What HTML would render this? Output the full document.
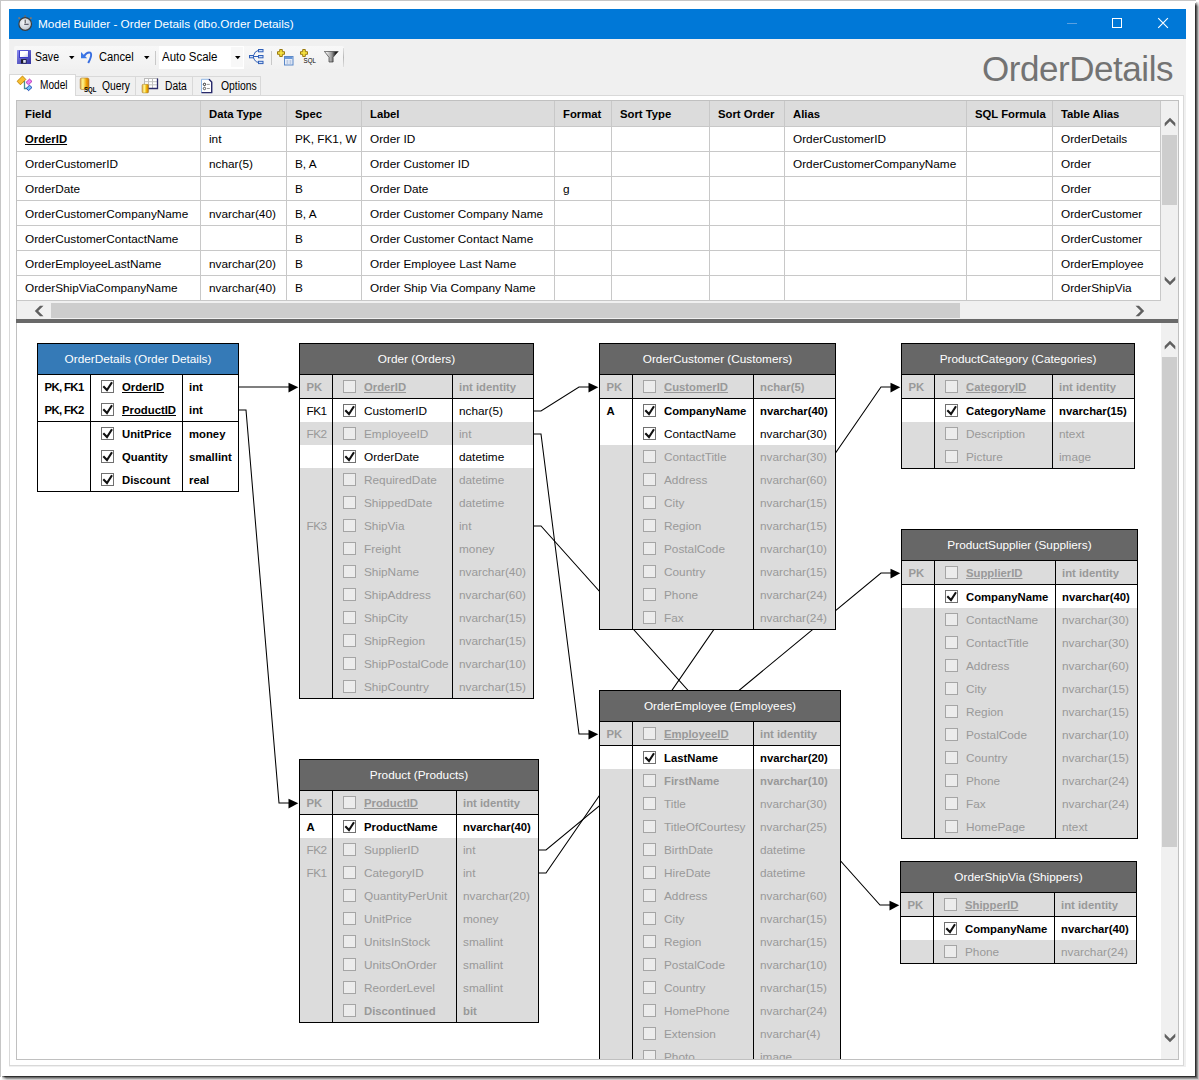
<!DOCTYPE html><html><head><meta charset="utf-8"><style>
*{box-sizing:border-box;margin:0;padding:0}
html,body{width:1199px;height:1080px;overflow:hidden;background:#fff;font-family:"Liberation Sans",sans-serif;}
.a{position:absolute}
.t{position:absolute;white-space:pre;}
.g{font-size:11.8px;color:#000;line-height:24px;height:24px}
.gh{font-size:11.3px;font-weight:bold;color:#000;line-height:25px;height:25px}
.tb{position:absolute;border:1px solid #000;background:#fff;overflow:hidden}
.th{position:absolute;left:0;right:0;top:0;height:30px;color:#fff;font-size:11.8px;line-height:30px;text-align:center;white-space:pre}
.r{position:absolute;height:23px;line-height:23px;font-size:11.8px;white-space:pre;margin-top:1px}
.b{font-weight:bold;font-size:11.3px;margin-top:1px}
.u{text-decoration:underline}
.gr{color:#999}
.cb{position:absolute;width:13px;height:13px;border:1px solid #a5a5a5;background:#ececec}
.cbc{border-color:#707070;background:#fff}
.cbc svg{position:absolute;left:-1px;top:-1px}
</style></head><body><div class="a" style="left:0;top:0;width:1196px;height:1px;background:#c6c6c6"></div><div class="a" style="left:0;top:0;width:1px;height:1077px;background:#c6c6c6"></div><div class="a" style="left:1195px;top:3px;width:1px;height:1074px;background:linear-gradient(to bottom,#aaa,#2e2e2e 3px)"></div><div class="a" style="left:1196px;top:2px;width:1px;height:1076px;background:linear-gradient(to bottom,#ddd,#5c5c5c 4px)"></div><div class="a" style="left:1197px;top:2px;width:1px;height:1077px;background:linear-gradient(to bottom,#eee,#8e8e8e 5px)"></div><div class="a" style="left:1198px;top:1px;width:1px;height:1079px;background:linear-gradient(to bottom,#fff,#c4c4c4 6px)"></div><div class="a" style="left:2px;top:1076px;width:1194px;height:1px;background:linear-gradient(to right,#aaa,#2e2e2e 3px)"></div><div class="a" style="left:2px;top:1077px;width:1195px;height:1px;background:linear-gradient(to right,#ddd,#6e6e6e 4px)"></div><div class="a" style="left:2px;top:1078px;width:1196px;height:1px;background:linear-gradient(to right,#eee,#9a9a9a 5px)"></div><div class="a" style="left:1px;top:1079px;width:1198px;height:1px;background:linear-gradient(to right,#fff,#cccccc 6px)"></div><div class="a" style="left:9px;top:39px;width:1177px;height:1028px;background:#f0f0f0"></div><div class="a" style="left:9px;top:9px;width:1177px;height:30px;background:#0078d7"></div><div class="t" style="left:38px;top:9px;line-height:30px;font-size:11.8px;color:#fff">Model Builder - Order Details (dbo.Order Details)</div><svg class="a" style="left:17px;top:14px" width="17" height="18" viewBox="0 0 17 18">
<defs><radialGradient id="sw" cx="0.4" cy="0.4" r="0.7"><stop offset="0" stop-color="#f4f6f8"/><stop offset="1" stop-color="#b8c0c8"/></radialGradient></defs>
<rect x="7.3" y="1.3" width="1.6" height="2.5" fill="#666"/><circle cx="2.2" cy="4.2" r="1.1" fill="#777"/><circle cx="13.8" cy="4.2" r="1.1" fill="#777"/>
<circle cx="8.2" cy="10" r="6.3" fill="url(#sw)" stroke="#3c3c3c" stroke-width="1.2"/>
<line x1="8.2" y1="5.6" x2="8.2" y2="9.3" stroke="#444" stroke-width="1"/><line x1="7.2" y1="10.3" x2="11.6" y2="10.3" stroke="#445" stroke-width="1.1"/></svg><div class="a" style="left:1067px;top:23px;width:10px;height:1px;background:#5aa0e0"></div><div class="a" style="left:1112px;top:18px;width:10px;height:10px;border:1px solid #fff"></div><svg class="a" style="left:1157px;top:17px" width="12" height="12" viewBox="0 0 12 12"><path d="M1.2 1.2L10.9 10.9M10.9 1.2L1.2 10.9" stroke="#fff" stroke-width="1.15"/></svg><div class="a" style="left:14px;top:46px;width:330px;height:23px;background:linear-gradient(#f8f8f8,#f1f1f1);border-radius:2px"></div><svg class="a" style="left:17px;top:50px" width="14" height="14" viewBox="0 0 14 14">
<defs><linearGradient id="sg" x1="0" y1="0" x2="1" y2="1"><stop offset="0" stop-color="#8a8af0"/><stop offset="1" stop-color="#3232a0"/></linearGradient>
<linearGradient id="sl" x1="0" y1="0" x2="1" y2="1"><stop offset="0.5" stop-color="#fff"/><stop offset="1" stop-color="#c8cce8"/></linearGradient></defs>
<rect x="0" y="0" width="14" height="14" rx="0.5" fill="url(#sg)"/><rect x="2" y="0.5" width="9.5" height="7.5" fill="#3a3ac8"/><rect x="3" y="1" width="8" height="6" fill="url(#sl)"/>
<rect x="4" y="9.2" width="5.5" height="4.3" fill="#1a1a2a"/><rect x="6.2" y="10" width="2.6" height="2.8" fill="#dfe4f4"/></svg><div class="t" style="left:35px;top:45.5px;line-height:23px;font-size:12px;color:#000;transform:scaleX(0.877);transform-origin:0 50%">Save</div><svg class="a" style="left:68.8px;top:56px" width="6" height="4"><path d="M0 0H5.5L2.75 3.3Z" fill="#000"/></svg><svg class="a" style="left:80px;top:49px" width="14" height="16" viewBox="0 0 14 16">
<path d="M1 3L1 9.2L7.2 9.2Z" fill="#3a78e8"/><path d="M4.2 7 Q7 2.6 10.2 3.6 Q12.8 5.5 8.2 14" fill="none" stroke="#3a6fe0" stroke-width="2"/></svg><div class="t" style="left:98.5px;top:45.5px;line-height:23px;font-size:12px;color:#000;transform:scaleX(0.93);transform-origin:0 50%">Cancel</div><svg class="a" style="left:143.5px;top:56px" width="6" height="4"><path d="M0 0H5.5L2.75 3.3Z" fill="#000"/></svg><div class="a" style="left:155px;top:51px;width:1px;height:14px;background:#c8c8c8"></div><div class="a" style="left:159px;top:46px;width:85px;height:23px;background:#fff"></div><div class="a" style="left:231px;top:47px;width:12px;height:20px;background:#f8f8f8"></div><div class="t" style="left:162px;top:45.5px;line-height:23px;font-size:12px;color:#000;transform:scaleX(0.956);transform-origin:0 50%">Auto Scale</div><svg class="a" style="left:235px;top:56px" width="6" height="4"><path d="M0 0H5.5L2.75 3.3Z" fill="#000"/></svg><svg class="a" style="left:249px;top:49px" width="15" height="16" viewBox="0 0 15 16">
<path d="M4 7.5H9.5M4 7.5Q6 1.5 9.5 1.3M4 7.5Q6 13.5 9.5 13.3" stroke="#2f5fb8" stroke-width="1" fill="none"/>
<rect x="0.5" y="6.5" width="4" height="2.3" fill="#cfe0f8" stroke="#2f5fb8"/><rect x="9.5" y="0.5" width="4.5" height="2.3" fill="#cfe0f8" stroke="#2f5fb8"/><rect x="9.5" y="6.5" width="4.5" height="2.3" fill="#cfe0f8" stroke="#2f5fb8"/><rect x="9.5" y="12.3" width="4.5" height="2.3" fill="#cfe0f8" stroke="#2f5fb8"/></svg><div class="a" style="left:271px;top:51px;width:1px;height:14px;background:#c8c8c8"></div><svg class="a" style="left:277px;top:49px" width="17" height="17" viewBox="0 0 17 17">
<path d="M2.7 0.5H5.3V2.7H7.5V5.3H5.3V7.5H2.7V5.3H0.5V2.7H2.7Z" fill="#f4e040" stroke="#9a7a10" stroke-width="1"/>
<rect x="7.5" y="7.5" width="8.5" height="8.5" fill="#e8eef8" stroke="#5a88c8"/><rect x="8" y="8" width="7.5" height="2" fill="#6a98d8"/><path d="M9.5 12H11.3M12.5 12H14.3M9.5 14H11.3M12.5 14H14.3" stroke="#90a8d0" stroke-width="1"/></svg><svg class="a" style="left:300px;top:49px" width="18" height="17" viewBox="0 0 18 17">
<path d="M2.7 0.5H5.3V2.7H7.5V5.3H5.3V7.5H2.7V5.3H0.5V2.7H2.7Z" fill="#f4e040" stroke="#9a7a10" stroke-width="1"/>
<text x="3.6" y="14.3" font-family="Liberation Sans" font-size="7.6" fill="#000" textLength="12.4" lengthAdjust="spacingAndGlyphs">SQL</text></svg><svg class="a" style="left:324px;top:51px" width="15" height="12" viewBox="0 0 15 12">
<defs><linearGradient id="fg" x1="0" y1="0" x2="1" y2="0"><stop offset="0.1" stop-color="#fafafa"/><stop offset="0.55" stop-color="#909090"/><stop offset="0.85" stop-color="#101010"/></linearGradient></defs>
<path d="M0.4 0.4H14.2L9.1 6.3V11H5V6.3Z" fill="url(#fg)" stroke="#3a3a3a" stroke-width="0.7"/></svg><div class="a" style="left:343px;top:48px;width:1px;height:19px;background:linear-gradient(#e0e0e0,#b8b8b8 50%,#e0e0e0)"></div><div class="t" style="left:982px;top:47px;font-size:35px;letter-spacing:-0.45px;line-height:44px;color:#737373">OrderDetails</div><div class="a" style="left:9px;top:95px;width:1175px;height:971px;background:#fff;border:1px solid #d9d9d9;border-top-color:#d9d9d9"></div><div class="a" style="left:75px;top:76px;width:61px;height:19px;background:#f0f0f0;border:1px solid #d9d9d9;border-bottom:none"></div><div class="t" style="left:102px;top:78px;line-height:17px;font-size:12px;color:#000;transform:scaleX(0.857);transform-origin:0 50%">Query</div><div class="a" style="left:135px;top:76px;width:58px;height:19px;background:#f0f0f0;border:1px solid #d9d9d9;border-bottom:none"></div><div class="t" style="left:164.5px;top:78px;line-height:17px;font-size:12px;color:#000;transform:scaleX(0.856);transform-origin:0 50%">Data</div><div class="a" style="left:192px;top:76px;width:69px;height:19px;background:#f0f0f0;border:1px solid #d9d9d9;border-bottom:none"></div><div class="t" style="left:220.5px;top:78px;line-height:17px;font-size:12px;color:#000;transform:scaleX(0.863);transform-origin:0 50%">Options</div><div class="a" style="left:9px;top:74px;width:67px;height:22px;background:#fff;border:1px solid #d9d9d9;border-bottom:none"></div><div class="t" style="left:39.5px;top:77px;line-height:17px;font-size:12px;color:#000;transform:scaleX(0.841);transform-origin:0 50%">Model</div><svg class="a" style="left:14px;top:74px" width="22" height="22" viewBox="0 0 22 22">
<path d="M9 7.5H10.5V14.5H13" stroke="#4a9090" stroke-width="1.3" fill="none"/>
<path d="M3.1 7.3L8.5 2L11.8 5.4L6.4 10.8Z" fill="#f8c030" stroke="#c08000" stroke-width="0.9"/>
<path d="M12 8.4L15.5 5.1L18 7.4L14.5 10.8Z" fill="#f080f0" stroke="#b030b0" stroke-width="0.9"/>
<path d="M12.4 14.3L15.5 11.2L18 13.5L14.5 16.7Z" fill="#70c0f8" stroke="#1840b0" stroke-width="0.9"/></svg><svg class="a" style="left:78px;top:74px" width="22" height="22" viewBox="0 0 22 22">
<defs><linearGradient id="cy" x1="0" y1="0" x2="1" y2="0"><stop offset="0" stop-color="#e0a040"/><stop offset="0.3" stop-color="#fff890"/><stop offset="0.7" stop-color="#f0a000"/><stop offset="1" stop-color="#c07010"/></linearGradient></defs>
<rect x="2.2" y="4" width="8.8" height="11.5" rx="1.5" fill="url(#cy)" stroke="#b08030" stroke-width="0.6"/>
<text x="6" y="18" font-family="Liberation Sans" font-weight="bold" font-size="6.8" fill="#000" textLength="12.3" lengthAdjust="spacingAndGlyphs">SQL</text></svg><svg class="a" style="left:138px;top:74px" width="22" height="22" viewBox="0 0 22 22">
<defs><linearGradient id="cy2" x1="0" y1="0" x2="1" y2="0"><stop offset="0" stop-color="#e0a040"/><stop offset="0.35" stop-color="#fff890"/><stop offset="0.7" stop-color="#f0b000"/><stop offset="1" stop-color="#c07010"/></linearGradient></defs>
<rect x="6.5" y="4.5" width="13" height="10" fill="#fff" stroke="#bbb" stroke-width="1"/><path d="M6.5 7.7H19.5M6.5 10.8H19.5M10.5 4.5V14.5M14.5 4.5V14.5" stroke="#c0c0c0" stroke-width="1"/>
<path d="M19.5 4.5V14.5H10" stroke="#2a2a6a" stroke-width="1.3" fill="none"/>
<rect x="4" y="10.3" width="6.6" height="8.6" rx="1.2" fill="url(#cy2)" stroke="#a08030" stroke-width="0.5"/></svg><svg class="a" style="left:196px;top:74px" width="22" height="22" viewBox="0 0 22 22">
<path d="M5.5 5.3H13L15.7 8V18.6H5.5Z" fill="#fff" stroke="#90b8e8" stroke-width="1"/>
<path d="M13 5.3L15.7 8V18.6H5.5" stroke="#2a2a6a" stroke-width="1.4" fill="none"/>
<circle cx="8.5" cy="10.4" r="1.2" fill="none" stroke="#111" stroke-width="0.9"/><circle cx="8.5" cy="14.5" r="1.2" fill="none" stroke="#444" stroke-width="0.9"/>
<path d="M11 10.4H13.8M11 14.5H13.8" stroke="#999" stroke-width="1"/></svg><div class="a" style="left:16px;top:100px;width:1163px;height:219px;background:#fff;border:1px solid #c0c0c0;border-bottom:none"></div><div class="a" style="left:17px;top:101px;width:1144px;height:25px;background:#dcdcdc"></div><div class="a" style="left:200px;top:101px;width:1px;height:200px;background:#c8c8c8"></div><div class="a" style="left:286px;top:101px;width:1px;height:200px;background:#c8c8c8"></div><div class="a" style="left:361px;top:101px;width:1px;height:200px;background:#c8c8c8"></div><div class="a" style="left:554px;top:101px;width:1px;height:200px;background:#c8c8c8"></div><div class="a" style="left:611px;top:101px;width:1px;height:200px;background:#c8c8c8"></div><div class="a" style="left:709px;top:101px;width:1px;height:200px;background:#c8c8c8"></div><div class="a" style="left:784px;top:101px;width:1px;height:200px;background:#c8c8c8"></div><div class="a" style="left:966px;top:101px;width:1px;height:200px;background:#c8c8c8"></div><div class="a" style="left:1052px;top:101px;width:1px;height:200px;background:#c8c8c8"></div><div class="a" style="left:1160px;top:101px;width:1px;height:200px;background:#c8c8c8"></div><div class="a" style="left:17px;top:126px;width:1144px;height:1px;background:#c8c8c8"></div><div class="a" style="left:17px;top:151px;width:1144px;height:1px;background:#c8c8c8"></div><div class="a" style="left:17px;top:176px;width:1144px;height:1px;background:#c8c8c8"></div><div class="a" style="left:17px;top:200px;width:1144px;height:1px;background:#c8c8c8"></div><div class="a" style="left:17px;top:225px;width:1144px;height:1px;background:#c8c8c8"></div><div class="a" style="left:17px;top:250px;width:1144px;height:1px;background:#c8c8c8"></div><div class="a" style="left:17px;top:275px;width:1144px;height:1px;background:#c8c8c8"></div><div class="a" style="left:17px;top:300px;width:1144px;height:1px;background:#c8c8c8"></div><div class="t gh" style="left:25px;top:102px">Field</div><div class="t gh" style="left:209px;top:102px">Data Type</div><div class="t gh" style="left:295px;top:102px">Spec</div><div class="t gh" style="left:370px;top:102px">Label</div><div class="t gh" style="left:563px;top:102px">Format</div><div class="t gh" style="left:620px;top:102px">Sort Type</div><div class="t gh" style="left:718px;top:102px">Sort Order</div><div class="t gh" style="left:793px;top:102px">Alias</div><div class="t gh" style="left:975px;top:102px">SQL Formula</div><div class="t gh" style="left:1061px;top:102px">Table Alias</div><div class="t gh u" style="left:25px;top:127px;line-height:24px;height:24px;font-size:11.3px">OrderID</div><div class="t g" style="left:209px;top:127px;line-height:24px;height:24px">int</div><div class="t g" style="left:295px;top:127px;line-height:24px;height:24px">PK, FK1, W</div><div class="t g" style="left:370px;top:127px;line-height:24px;height:24px">Order ID</div><div class="t g" style="left:793px;top:127px;line-height:24px;height:24px">OrderCustomerID</div><div class="t g" style="left:1061px;top:127px;line-height:24px;height:24px">OrderDetails</div><div class="t g" style="left:25px;top:152px;line-height:24px;height:24px">OrderCustomerID</div><div class="t g" style="left:209px;top:152px;line-height:24px;height:24px">nchar(5)</div><div class="t g" style="left:295px;top:152px;line-height:24px;height:24px">B, A</div><div class="t g" style="left:370px;top:152px;line-height:24px;height:24px">Order Customer ID</div><div class="t g" style="left:793px;top:152px;line-height:24px;height:24px">OrderCustomerCompanyName</div><div class="t g" style="left:1061px;top:152px;line-height:24px;height:24px">Order</div><div class="t g" style="left:25px;top:177px;line-height:24px;height:24px">OrderDate</div><div class="t g" style="left:295px;top:177px;line-height:24px;height:24px">B</div><div class="t g" style="left:370px;top:177px;line-height:24px;height:24px">Order Date</div><div class="t g" style="left:563px;top:177px;line-height:24px;height:24px">g</div><div class="t g" style="left:1061px;top:177px;line-height:24px;height:24px">Order</div><div class="t g" style="left:25px;top:202px;line-height:24px;height:24px">OrderCustomerCompanyName</div><div class="t g" style="left:209px;top:202px;line-height:24px;height:24px">nvarchar(40)</div><div class="t g" style="left:295px;top:202px;line-height:24px;height:24px">B, A</div><div class="t g" style="left:370px;top:202px;line-height:24px;height:24px">Order Customer Company Name</div><div class="t g" style="left:1061px;top:202px;line-height:24px;height:24px">OrderCustomer</div><div class="t g" style="left:25px;top:227px;line-height:24px;height:24px">OrderCustomerContactName</div><div class="t g" style="left:295px;top:227px;line-height:24px;height:24px">B</div><div class="t g" style="left:370px;top:227px;line-height:24px;height:24px">Order Customer Contact Name</div><div class="t g" style="left:1061px;top:227px;line-height:24px;height:24px">OrderCustomer</div><div class="t g" style="left:25px;top:252px;line-height:24px;height:24px">OrderEmployeeLastName</div><div class="t g" style="left:209px;top:252px;line-height:24px;height:24px">nvarchar(20)</div><div class="t g" style="left:295px;top:252px;line-height:24px;height:24px">B</div><div class="t g" style="left:370px;top:252px;line-height:24px;height:24px">Order Employee Last Name</div><div class="t g" style="left:1061px;top:252px;line-height:24px;height:24px">OrderEmployee</div><div class="t g" style="left:25px;top:276px;line-height:24px;height:24px">OrderShipViaCompanyName</div><div class="t g" style="left:209px;top:276px;line-height:24px;height:24px">nvarchar(40)</div><div class="t g" style="left:295px;top:276px;line-height:24px;height:24px">B</div><div class="t g" style="left:370px;top:276px;line-height:24px;height:24px">Order Ship Via Company Name</div><div class="t g" style="left:1061px;top:276px;line-height:24px;height:24px">OrderShipVia</div><div class="a" style="left:1161px;top:101px;width:17px;height:218px;background:#f0f0f0"></div><div class="a" style="left:1162px;top:135px;width:15px;height:70px;background:#cdcdcd"></div><div class="a" style="left:17px;top:301px;width:1144px;height:18px;background:#f0f0f0"></div><div class="a" style="left:51px;top:303px;width:909px;height:15px;background:#cdcdcd"></div><svg class="a" style="left:1161.5px;top:114.3px" width="16" height="16" viewBox="-8 -8 16 16"><path d="M-5.30 4.50L0.00 -0.80L5.30 4.50L5.30 1.00L0.00 -4.20L-5.30 1.00Z" fill="#606060"/></svg><svg class="a" style="left:1161.5px;top:272.5px" width="16" height="16" viewBox="-8 -8 16 16"><path d="M-5.30 -4.50L0.00 0.80L5.30 -4.50L5.30 -1.00L0.00 4.20L-5.30 -1.00Z" fill="#606060"/></svg><svg class="a" style="left:30.5px;top:302.5px" width="16" height="16" viewBox="-8 -8 16 16"><path d="M4.50 -5.30L-0.80 0.00L4.50 5.30L1.00 5.30L-4.20 0.00L1.00 -5.30Z" fill="#606060"/></svg><svg class="a" style="left:1132px;top:302.5px" width="16" height="16" viewBox="-8 -8 16 16"><path d="M-4.50 -5.30L0.80 0.00L-4.50 5.30L-1.00 5.30L4.20 0.00L-1.00 -5.30Z" fill="#606060"/></svg><div class="a" style="left:16px;top:319px;width:1163px;height:4px;background:#696969"></div><div class="a" style="left:16px;top:323px;width:1px;height:737px;background:#c0c0c0"></div><div class="a" style="left:16px;top:1059px;width:1163px;height:1px;background:#c0c0c0"></div><div class="a" style="left:1178px;top:101px;width:1px;height:959px;background:#c0c0c0"></div><div class="a" style="left:1161px;top:323px;width:17px;height:736px;background:#f0f0f0"></div><div class="a" style="left:1162px;top:357px;width:15px;height:490px;background:#cdcdcd"></div><svg class="a" style="left:1161.5px;top:336.5px" width="16" height="16" viewBox="-8 -8 16 16"><path d="M-5.30 4.50L0.00 -0.80L5.30 4.50L5.30 1.00L0.00 -4.20L-5.30 1.00Z" fill="#606060"/></svg><svg class="a" style="left:1161.5px;top:1029.5px" width="16" height="16" viewBox="-8 -8 16 16"><path d="M-5.30 -4.50L0.00 0.80L5.30 -4.50L5.30 -1.00L0.00 4.20L-5.30 -1.00Z" fill="#606060"/></svg><div class="a" style="left:17px;top:323px;width:1144px;height:736px;overflow:hidden"><svg class="a" style="left:0;top:0" width="1144" height="736"><polyline points="221,64 272,64" fill="none" stroke="#000" stroke-width="1.05"/><polyline points="221,87 229,87 262,480 272,480" fill="none" stroke="#000" stroke-width="1.05"/><polyline points="516,88 524,88 562,64 572,64" fill="none" stroke="#000" stroke-width="1.05"/><polyline points="516,111 524,111 562,411 572,411" fill="none" stroke="#000" stroke-width="1.05"/><polyline points="516,203 524,203 863,582 873,582" fill="none" stroke="#000" stroke-width="1.05"/><polyline points="521,527 529,527 864,250 874,250" fill="none" stroke="#000" stroke-width="1.05"/><polyline points="521,550 529,550 864,64 874,64" fill="none" stroke="#000" stroke-width="1.05"/><path d="M271.5 59.7L281.3 64.3L271.5 69.5Z" fill="#000"/><path d="M271.5 475.7L281.3 480.3L271.5 485.5Z" fill="#000"/><path d="M571.5 59.7L581.3 64.3L571.5 69.5Z" fill="#000"/><path d="M571.5 406.7L581.3 411.3L571.5 416.5Z" fill="#000"/><path d="M872.5 577.7L882.3 582.3L872.5 587.5Z" fill="#000"/><path d="M873.5 245.7L883.3 250.3L873.5 255.5Z" fill="#000"/><path d="M873.5 59.7L883.3 64.3L873.5 69.5Z" fill="#000"/></svg><div class="tb" style="left:20px;top:20px;width:202px;height:149px"><div class="th" style="background:#357ab7">OrderDetails (Order Details)</div><div class="a" style="left:0;right:0;top:30px;height:1px;background:#000"></div><div class="a" style="left:0;right:0;top:31px;height:23px;background:#fff"></div><div class="r b b" style="left:6.5px;top:31px;letter-spacing:-0.6px">PK, FK1</div><div class="cb cbc" style="left:63px;top:36px"><svg width="15" height="15" viewBox="0 0 15 15"><path d="M2.3 6.2L6 10L11 2.3" fill="none" stroke="#111" stroke-width="2.1"/></svg></div><div class="r b u" style="left:84px;top:31px">OrderID</div><div class="r b" style="left:151px;top:31px">int</div><div class="a" style="left:0;right:0;top:54px;height:23px;background:#fff"></div><div class="r b b" style="left:6.5px;top:54px;letter-spacing:-0.6px">PK, FK2</div><div class="cb cbc" style="left:63px;top:59px"><svg width="15" height="15" viewBox="0 0 15 15"><path d="M2.3 6.2L6 10L11 2.3" fill="none" stroke="#111" stroke-width="2.1"/></svg></div><div class="r b u" style="left:84px;top:54px">ProductID</div><div class="r b" style="left:151px;top:54px">int</div><div class="a" style="left:0;right:0;top:77px;height:1px;background:#000"></div><div class="a" style="left:0;right:0;top:78px;height:23px;background:#fff"></div><div class="cb cbc" style="left:63px;top:83px"><svg width="15" height="15" viewBox="0 0 15 15"><path d="M2.3 6.2L6 10L11 2.3" fill="none" stroke="#111" stroke-width="2.1"/></svg></div><div class="r b" style="left:84px;top:78px">UnitPrice</div><div class="r b" style="left:151px;top:78px">money</div><div class="a" style="left:0;right:0;top:101px;height:23px;background:#fff"></div><div class="cb cbc" style="left:63px;top:106px"><svg width="15" height="15" viewBox="0 0 15 15"><path d="M2.3 6.2L6 10L11 2.3" fill="none" stroke="#111" stroke-width="2.1"/></svg></div><div class="r b" style="left:84px;top:101px">Quantity</div><div class="r b" style="left:151px;top:101px">smallint</div><div class="a" style="left:0;right:0;top:124px;height:23px;background:#fff"></div><div class="cb cbc" style="left:63px;top:129px"><svg width="15" height="15" viewBox="0 0 15 15"><path d="M2.3 6.2L6 10L11 2.3" fill="none" stroke="#111" stroke-width="2.1"/></svg></div><div class="r b" style="left:84px;top:124px">Discount</div><div class="r b" style="left:151px;top:124px">real</div><div class="a" style="left:52px;top:31px;width:1px;bottom:0;background:#000"></div><div class="a" style="left:144px;top:31px;width:1px;bottom:0;background:#000"></div></div><div class="tb" style="left:282px;top:20px;width:235px;height:356px"><div class="th" style="background:#676767">Order (Orders)</div><div class="a" style="left:0;right:0;top:30px;height:1px;background:#000"></div><div class="a" style="left:0;right:0;top:31px;height:23px;background:#dcdcdc"></div><div class="r b gr b" style="left:6.5px;top:31px">PK</div><div class="cb" style="left:43px;top:36px"></div><div class="r b gr u" style="left:64px;top:31px">OrderID</div><div class="r b gr" style="left:159px;top:31px">int identity</div><div class="a" style="left:0;right:0;top:54px;height:1px;background:#000"></div><div class="a" style="left:0;right:0;top:55px;height:23px;background:#fff"></div><div class="r" style="left:6.5px;top:55px;letter-spacing:-0.5px">FK1</div><div class="cb cbc" style="left:43px;top:60px"><svg width="15" height="15" viewBox="0 0 15 15"><path d="M2.3 6.2L6 10L11 2.3" fill="none" stroke="#111" stroke-width="2.1"/></svg></div><div class="r" style="left:64px;top:55px">CustomerID</div><div class="r" style="left:159px;top:55px">nchar(5)</div><div class="a" style="left:0;right:0;top:78px;height:23px;background:#dcdcdc"></div><div class="r gr" style="left:6.5px;top:78px;letter-spacing:-0.5px">FK2</div><div class="cb" style="left:43px;top:83px"></div><div class="r gr" style="left:64px;top:78px">EmployeeID</div><div class="r gr" style="left:159px;top:78px">int</div><div class="a" style="left:0;right:0;top:101px;height:23px;background:#fff"></div><div class="cb cbc" style="left:43px;top:106px"><svg width="15" height="15" viewBox="0 0 15 15"><path d="M2.3 6.2L6 10L11 2.3" fill="none" stroke="#111" stroke-width="2.1"/></svg></div><div class="r" style="left:64px;top:101px">OrderDate</div><div class="r" style="left:159px;top:101px">datetime</div><div class="a" style="left:0;right:0;top:124px;height:23px;background:#dcdcdc"></div><div class="cb" style="left:43px;top:129px"></div><div class="r gr" style="left:64px;top:124px">RequiredDate</div><div class="r gr" style="left:159px;top:124px">datetime</div><div class="a" style="left:0;right:0;top:147px;height:23px;background:#dcdcdc"></div><div class="cb" style="left:43px;top:152px"></div><div class="r gr" style="left:64px;top:147px">ShippedDate</div><div class="r gr" style="left:159px;top:147px">datetime</div><div class="a" style="left:0;right:0;top:170px;height:23px;background:#dcdcdc"></div><div class="r gr" style="left:6.5px;top:170px;letter-spacing:-0.5px">FK3</div><div class="cb" style="left:43px;top:175px"></div><div class="r gr" style="left:64px;top:170px">ShipVia</div><div class="r gr" style="left:159px;top:170px">int</div><div class="a" style="left:0;right:0;top:193px;height:23px;background:#dcdcdc"></div><div class="cb" style="left:43px;top:198px"></div><div class="r gr" style="left:64px;top:193px">Freight</div><div class="r gr" style="left:159px;top:193px">money</div><div class="a" style="left:0;right:0;top:216px;height:23px;background:#dcdcdc"></div><div class="cb" style="left:43px;top:221px"></div><div class="r gr" style="left:64px;top:216px">ShipName</div><div class="r gr" style="left:159px;top:216px">nvarchar(40)</div><div class="a" style="left:0;right:0;top:239px;height:23px;background:#dcdcdc"></div><div class="cb" style="left:43px;top:244px"></div><div class="r gr" style="left:64px;top:239px">ShipAddress</div><div class="r gr" style="left:159px;top:239px">nvarchar(60)</div><div class="a" style="left:0;right:0;top:262px;height:23px;background:#dcdcdc"></div><div class="cb" style="left:43px;top:267px"></div><div class="r gr" style="left:64px;top:262px">ShipCity</div><div class="r gr" style="left:159px;top:262px">nvarchar(15)</div><div class="a" style="left:0;right:0;top:285px;height:23px;background:#dcdcdc"></div><div class="cb" style="left:43px;top:290px"></div><div class="r gr" style="left:64px;top:285px">ShipRegion</div><div class="r gr" style="left:159px;top:285px">nvarchar(15)</div><div class="a" style="left:0;right:0;top:308px;height:23px;background:#dcdcdc"></div><div class="cb" style="left:43px;top:313px"></div><div class="r gr" style="left:64px;top:308px">ShipPostalCode</div><div class="r gr" style="left:159px;top:308px">nvarchar(10)</div><div class="a" style="left:0;right:0;top:331px;height:23px;background:#dcdcdc"></div><div class="cb" style="left:43px;top:336px"></div><div class="r gr" style="left:64px;top:331px">ShipCountry</div><div class="r gr" style="left:159px;top:331px">nvarchar(15)</div><div class="a" style="left:32px;top:31px;width:1px;bottom:0;background:#000"></div><div class="a" style="left:152px;top:31px;width:1px;bottom:0;background:#000"></div></div><div class="tb" style="left:582px;top:20px;width:237px;height:287px"><div class="th" style="background:#676767">OrderCustomer (Customers)</div><div class="a" style="left:0;right:0;top:30px;height:1px;background:#000"></div><div class="a" style="left:0;right:0;top:31px;height:23px;background:#dcdcdc"></div><div class="r b gr b" style="left:6.5px;top:31px">PK</div><div class="cb" style="left:43px;top:36px"></div><div class="r b gr u" style="left:64px;top:31px">CustomerID</div><div class="r b gr" style="left:160px;top:31px">nchar(5)</div><div class="a" style="left:0;right:0;top:54px;height:1px;background:#000"></div><div class="a" style="left:0;right:0;top:55px;height:23px;background:#fff"></div><div class="r b b" style="left:6.5px;top:55px">A</div><div class="cb cbc" style="left:43px;top:60px"><svg width="15" height="15" viewBox="0 0 15 15"><path d="M2.3 6.2L6 10L11 2.3" fill="none" stroke="#111" stroke-width="2.1"/></svg></div><div class="r b" style="left:64px;top:55px">CompanyName</div><div class="r b" style="left:160px;top:55px">nvarchar(40)</div><div class="a" style="left:0;right:0;top:78px;height:23px;background:#fff"></div><div class="cb cbc" style="left:43px;top:83px"><svg width="15" height="15" viewBox="0 0 15 15"><path d="M2.3 6.2L6 10L11 2.3" fill="none" stroke="#111" stroke-width="2.1"/></svg></div><div class="r" style="left:64px;top:78px">ContactName</div><div class="r" style="left:160px;top:78px">nvarchar(30)</div><div class="a" style="left:0;right:0;top:101px;height:23px;background:#dcdcdc"></div><div class="cb" style="left:43px;top:106px"></div><div class="r gr" style="left:64px;top:101px">ContactTitle</div><div class="r gr" style="left:160px;top:101px">nvarchar(30)</div><div class="a" style="left:0;right:0;top:124px;height:23px;background:#dcdcdc"></div><div class="cb" style="left:43px;top:129px"></div><div class="r gr" style="left:64px;top:124px">Address</div><div class="r gr" style="left:160px;top:124px">nvarchar(60)</div><div class="a" style="left:0;right:0;top:147px;height:23px;background:#dcdcdc"></div><div class="cb" style="left:43px;top:152px"></div><div class="r gr" style="left:64px;top:147px">City</div><div class="r gr" style="left:160px;top:147px">nvarchar(15)</div><div class="a" style="left:0;right:0;top:170px;height:23px;background:#dcdcdc"></div><div class="cb" style="left:43px;top:175px"></div><div class="r gr" style="left:64px;top:170px">Region</div><div class="r gr" style="left:160px;top:170px">nvarchar(15)</div><div class="a" style="left:0;right:0;top:193px;height:23px;background:#dcdcdc"></div><div class="cb" style="left:43px;top:198px"></div><div class="r gr" style="left:64px;top:193px">PostalCode</div><div class="r gr" style="left:160px;top:193px">nvarchar(10)</div><div class="a" style="left:0;right:0;top:216px;height:23px;background:#dcdcdc"></div><div class="cb" style="left:43px;top:221px"></div><div class="r gr" style="left:64px;top:216px">Country</div><div class="r gr" style="left:160px;top:216px">nvarchar(15)</div><div class="a" style="left:0;right:0;top:239px;height:23px;background:#dcdcdc"></div><div class="cb" style="left:43px;top:244px"></div><div class="r gr" style="left:64px;top:239px">Phone</div><div class="r gr" style="left:160px;top:239px">nvarchar(24)</div><div class="a" style="left:0;right:0;top:262px;height:23px;background:#dcdcdc"></div><div class="cb" style="left:43px;top:267px"></div><div class="r gr" style="left:64px;top:262px">Fax</div><div class="r gr" style="left:160px;top:262px">nvarchar(24)</div><div class="a" style="left:32px;top:31px;width:1px;bottom:0;background:#000"></div><div class="a" style="left:153px;top:31px;width:1px;bottom:0;background:#000"></div></div><div class="tb" style="left:884px;top:20px;width:234px;height:126px"><div class="th" style="background:#676767">ProductCategory (Categories)</div><div class="a" style="left:0;right:0;top:30px;height:1px;background:#000"></div><div class="a" style="left:0;right:0;top:31px;height:23px;background:#dcdcdc"></div><div class="r b gr b" style="left:6.5px;top:31px">PK</div><div class="cb" style="left:43px;top:36px"></div><div class="r b gr u" style="left:64px;top:31px">CategoryID</div><div class="r b gr" style="left:157px;top:31px">int identity</div><div class="a" style="left:0;right:0;top:54px;height:1px;background:#000"></div><div class="a" style="left:0;right:0;top:55px;height:23px;background:#fff"></div><div class="cb cbc" style="left:43px;top:60px"><svg width="15" height="15" viewBox="0 0 15 15"><path d="M2.3 6.2L6 10L11 2.3" fill="none" stroke="#111" stroke-width="2.1"/></svg></div><div class="r b" style="left:64px;top:55px">CategoryName</div><div class="r b" style="left:157px;top:55px">nvarchar(15)</div><div class="a" style="left:0;right:0;top:78px;height:23px;background:#dcdcdc"></div><div class="cb" style="left:43px;top:83px"></div><div class="r gr" style="left:64px;top:78px">Description</div><div class="r gr" style="left:157px;top:78px">ntext</div><div class="a" style="left:0;right:0;top:101px;height:23px;background:#dcdcdc"></div><div class="cb" style="left:43px;top:106px"></div><div class="r gr" style="left:64px;top:101px">Picture</div><div class="r gr" style="left:157px;top:101px">image</div><div class="a" style="left:32px;top:31px;width:1px;bottom:0;background:#000"></div><div class="a" style="left:150px;top:31px;width:1px;bottom:0;background:#000"></div></div><div class="tb" style="left:884px;top:206px;width:237px;height:310px"><div class="th" style="background:#676767">ProductSupplier (Suppliers)</div><div class="a" style="left:0;right:0;top:30px;height:1px;background:#000"></div><div class="a" style="left:0;right:0;top:31px;height:23px;background:#dcdcdc"></div><div class="r b gr b" style="left:6.5px;top:31px">PK</div><div class="cb" style="left:43px;top:36px"></div><div class="r b gr u" style="left:64px;top:31px">SupplierID</div><div class="r b gr" style="left:160px;top:31px">int identity</div><div class="a" style="left:0;right:0;top:54px;height:1px;background:#000"></div><div class="a" style="left:0;right:0;top:55px;height:23px;background:#fff"></div><div class="cb cbc" style="left:43px;top:60px"><svg width="15" height="15" viewBox="0 0 15 15"><path d="M2.3 6.2L6 10L11 2.3" fill="none" stroke="#111" stroke-width="2.1"/></svg></div><div class="r b" style="left:64px;top:55px">CompanyName</div><div class="r b" style="left:160px;top:55px">nvarchar(40)</div><div class="a" style="left:0;right:0;top:78px;height:23px;background:#dcdcdc"></div><div class="cb" style="left:43px;top:83px"></div><div class="r gr" style="left:64px;top:78px">ContactName</div><div class="r gr" style="left:160px;top:78px">nvarchar(30)</div><div class="a" style="left:0;right:0;top:101px;height:23px;background:#dcdcdc"></div><div class="cb" style="left:43px;top:106px"></div><div class="r gr" style="left:64px;top:101px">ContactTitle</div><div class="r gr" style="left:160px;top:101px">nvarchar(30)</div><div class="a" style="left:0;right:0;top:124px;height:23px;background:#dcdcdc"></div><div class="cb" style="left:43px;top:129px"></div><div class="r gr" style="left:64px;top:124px">Address</div><div class="r gr" style="left:160px;top:124px">nvarchar(60)</div><div class="a" style="left:0;right:0;top:147px;height:23px;background:#dcdcdc"></div><div class="cb" style="left:43px;top:152px"></div><div class="r gr" style="left:64px;top:147px">City</div><div class="r gr" style="left:160px;top:147px">nvarchar(15)</div><div class="a" style="left:0;right:0;top:170px;height:23px;background:#dcdcdc"></div><div class="cb" style="left:43px;top:175px"></div><div class="r gr" style="left:64px;top:170px">Region</div><div class="r gr" style="left:160px;top:170px">nvarchar(15)</div><div class="a" style="left:0;right:0;top:193px;height:23px;background:#dcdcdc"></div><div class="cb" style="left:43px;top:198px"></div><div class="r gr" style="left:64px;top:193px">PostalCode</div><div class="r gr" style="left:160px;top:193px">nvarchar(10)</div><div class="a" style="left:0;right:0;top:216px;height:23px;background:#dcdcdc"></div><div class="cb" style="left:43px;top:221px"></div><div class="r gr" style="left:64px;top:216px">Country</div><div class="r gr" style="left:160px;top:216px">nvarchar(15)</div><div class="a" style="left:0;right:0;top:239px;height:23px;background:#dcdcdc"></div><div class="cb" style="left:43px;top:244px"></div><div class="r gr" style="left:64px;top:239px">Phone</div><div class="r gr" style="left:160px;top:239px">nvarchar(24)</div><div class="a" style="left:0;right:0;top:262px;height:23px;background:#dcdcdc"></div><div class="cb" style="left:43px;top:267px"></div><div class="r gr" style="left:64px;top:262px">Fax</div><div class="r gr" style="left:160px;top:262px">nvarchar(24)</div><div class="a" style="left:0;right:0;top:285px;height:23px;background:#dcdcdc"></div><div class="cb" style="left:43px;top:290px"></div><div class="r gr" style="left:64px;top:285px">HomePage</div><div class="r gr" style="left:160px;top:285px">ntext</div><div class="a" style="left:32px;top:31px;width:1px;bottom:0;background:#000"></div><div class="a" style="left:153px;top:31px;width:1px;bottom:0;background:#000"></div></div><div class="tb" style="left:883px;top:538px;width:237px;height:103px"><div class="th" style="background:#676767">OrderShipVia (Shippers)</div><div class="a" style="left:0;right:0;top:30px;height:1px;background:#000"></div><div class="a" style="left:0;right:0;top:31px;height:23px;background:#dcdcdc"></div><div class="r b gr b" style="left:6.5px;top:31px">PK</div><div class="cb" style="left:43px;top:36px"></div><div class="r b gr u" style="left:64px;top:31px">ShipperID</div><div class="r b gr" style="left:160px;top:31px">int identity</div><div class="a" style="left:0;right:0;top:54px;height:1px;background:#000"></div><div class="a" style="left:0;right:0;top:55px;height:23px;background:#fff"></div><div class="cb cbc" style="left:43px;top:60px"><svg width="15" height="15" viewBox="0 0 15 15"><path d="M2.3 6.2L6 10L11 2.3" fill="none" stroke="#111" stroke-width="2.1"/></svg></div><div class="r b" style="left:64px;top:55px">CompanyName</div><div class="r b" style="left:160px;top:55px">nvarchar(40)</div><div class="a" style="left:0;right:0;top:78px;height:23px;background:#dcdcdc"></div><div class="cb" style="left:43px;top:83px"></div><div class="r gr" style="left:64px;top:78px">Phone</div><div class="r gr" style="left:160px;top:78px">nvarchar(24)</div><div class="a" style="left:32px;top:31px;width:1px;bottom:0;background:#000"></div><div class="a" style="left:153px;top:31px;width:1px;bottom:0;background:#000"></div></div><div class="tb" style="left:282px;top:436px;width:240px;height:264px"><div class="th" style="background:#676767">Product (Products)</div><div class="a" style="left:0;right:0;top:30px;height:1px;background:#000"></div><div class="a" style="left:0;right:0;top:31px;height:23px;background:#dcdcdc"></div><div class="r b gr b" style="left:6.5px;top:31px">PK</div><div class="cb" style="left:43px;top:36px"></div><div class="r b gr u" style="left:64px;top:31px">ProductID</div><div class="r b gr" style="left:163px;top:31px">int identity</div><div class="a" style="left:0;right:0;top:54px;height:1px;background:#000"></div><div class="a" style="left:0;right:0;top:55px;height:23px;background:#fff"></div><div class="r b b" style="left:6.5px;top:55px">A</div><div class="cb cbc" style="left:43px;top:60px"><svg width="15" height="15" viewBox="0 0 15 15"><path d="M2.3 6.2L6 10L11 2.3" fill="none" stroke="#111" stroke-width="2.1"/></svg></div><div class="r b" style="left:64px;top:55px">ProductName</div><div class="r b" style="left:163px;top:55px">nvarchar(40)</div><div class="a" style="left:0;right:0;top:78px;height:23px;background:#dcdcdc"></div><div class="r gr" style="left:6.5px;top:78px;letter-spacing:-0.5px">FK2</div><div class="cb" style="left:43px;top:83px"></div><div class="r gr" style="left:64px;top:78px">SupplierID</div><div class="r gr" style="left:163px;top:78px">int</div><div class="a" style="left:0;right:0;top:101px;height:23px;background:#dcdcdc"></div><div class="r gr" style="left:6.5px;top:101px;letter-spacing:-0.5px">FK1</div><div class="cb" style="left:43px;top:106px"></div><div class="r gr" style="left:64px;top:101px">CategoryID</div><div class="r gr" style="left:163px;top:101px">int</div><div class="a" style="left:0;right:0;top:124px;height:23px;background:#dcdcdc"></div><div class="cb" style="left:43px;top:129px"></div><div class="r gr" style="left:64px;top:124px">QuantityPerUnit</div><div class="r gr" style="left:163px;top:124px">nvarchar(20)</div><div class="a" style="left:0;right:0;top:147px;height:23px;background:#dcdcdc"></div><div class="cb" style="left:43px;top:152px"></div><div class="r gr" style="left:64px;top:147px">UnitPrice</div><div class="r gr" style="left:163px;top:147px">money</div><div class="a" style="left:0;right:0;top:170px;height:23px;background:#dcdcdc"></div><div class="cb" style="left:43px;top:175px"></div><div class="r gr" style="left:64px;top:170px">UnitsInStock</div><div class="r gr" style="left:163px;top:170px">smallint</div><div class="a" style="left:0;right:0;top:193px;height:23px;background:#dcdcdc"></div><div class="cb" style="left:43px;top:198px"></div><div class="r gr" style="left:64px;top:193px">UnitsOnOrder</div><div class="r gr" style="left:163px;top:193px">smallint</div><div class="a" style="left:0;right:0;top:216px;height:23px;background:#dcdcdc"></div><div class="cb" style="left:43px;top:221px"></div><div class="r gr" style="left:64px;top:216px">ReorderLevel</div><div class="r gr" style="left:163px;top:216px">smallint</div><div class="a" style="left:0;right:0;top:239px;height:23px;background:#dcdcdc"></div><div class="cb" style="left:43px;top:244px"></div><div class="r b gr" style="left:64px;top:239px">Discontinued</div><div class="r b gr" style="left:163px;top:239px">bit</div><div class="a" style="left:32px;top:31px;width:1px;bottom:0;background:#000"></div><div class="a" style="left:156px;top:31px;width:1px;bottom:0;background:#000"></div></div><div class="tb" style="left:582px;top:367px;width:242px;height:402px"><div class="th" style="background:#676767">OrderEmployee (Employees)</div><div class="a" style="left:0;right:0;top:30px;height:1px;background:#000"></div><div class="a" style="left:0;right:0;top:31px;height:23px;background:#dcdcdc"></div><div class="r b gr b" style="left:6.5px;top:31px">PK</div><div class="cb" style="left:43px;top:36px"></div><div class="r b gr u" style="left:64px;top:31px">EmployeeID</div><div class="r b gr" style="left:160px;top:31px">int identity</div><div class="a" style="left:0;right:0;top:54px;height:1px;background:#000"></div><div class="a" style="left:0;right:0;top:55px;height:23px;background:#fff"></div><div class="cb cbc" style="left:43px;top:60px"><svg width="15" height="15" viewBox="0 0 15 15"><path d="M2.3 6.2L6 10L11 2.3" fill="none" stroke="#111" stroke-width="2.1"/></svg></div><div class="r b" style="left:64px;top:55px">LastName</div><div class="r b" style="left:160px;top:55px">nvarchar(20)</div><div class="a" style="left:0;right:0;top:78px;height:23px;background:#dcdcdc"></div><div class="cb" style="left:43px;top:83px"></div><div class="r b gr" style="left:64px;top:78px">FirstName</div><div class="r b gr" style="left:160px;top:78px">nvarchar(10)</div><div class="a" style="left:0;right:0;top:101px;height:23px;background:#dcdcdc"></div><div class="cb" style="left:43px;top:106px"></div><div class="r gr" style="left:64px;top:101px">Title</div><div class="r gr" style="left:160px;top:101px">nvarchar(30)</div><div class="a" style="left:0;right:0;top:124px;height:23px;background:#dcdcdc"></div><div class="cb" style="left:43px;top:129px"></div><div class="r gr" style="left:64px;top:124px">TitleOfCourtesy</div><div class="r gr" style="left:160px;top:124px">nvarchar(25)</div><div class="a" style="left:0;right:0;top:147px;height:23px;background:#dcdcdc"></div><div class="cb" style="left:43px;top:152px"></div><div class="r gr" style="left:64px;top:147px">BirthDate</div><div class="r gr" style="left:160px;top:147px">datetime</div><div class="a" style="left:0;right:0;top:170px;height:23px;background:#dcdcdc"></div><div class="cb" style="left:43px;top:175px"></div><div class="r gr" style="left:64px;top:170px">HireDate</div><div class="r gr" style="left:160px;top:170px">datetime</div><div class="a" style="left:0;right:0;top:193px;height:23px;background:#dcdcdc"></div><div class="cb" style="left:43px;top:198px"></div><div class="r gr" style="left:64px;top:193px">Address</div><div class="r gr" style="left:160px;top:193px">nvarchar(60)</div><div class="a" style="left:0;right:0;top:216px;height:23px;background:#dcdcdc"></div><div class="cb" style="left:43px;top:221px"></div><div class="r gr" style="left:64px;top:216px">City</div><div class="r gr" style="left:160px;top:216px">nvarchar(15)</div><div class="a" style="left:0;right:0;top:239px;height:23px;background:#dcdcdc"></div><div class="cb" style="left:43px;top:244px"></div><div class="r gr" style="left:64px;top:239px">Region</div><div class="r gr" style="left:160px;top:239px">nvarchar(15)</div><div class="a" style="left:0;right:0;top:262px;height:23px;background:#dcdcdc"></div><div class="cb" style="left:43px;top:267px"></div><div class="r gr" style="left:64px;top:262px">PostalCode</div><div class="r gr" style="left:160px;top:262px">nvarchar(10)</div><div class="a" style="left:0;right:0;top:285px;height:23px;background:#dcdcdc"></div><div class="cb" style="left:43px;top:290px"></div><div class="r gr" style="left:64px;top:285px">Country</div><div class="r gr" style="left:160px;top:285px">nvarchar(15)</div><div class="a" style="left:0;right:0;top:308px;height:23px;background:#dcdcdc"></div><div class="cb" style="left:43px;top:313px"></div><div class="r gr" style="left:64px;top:308px">HomePhone</div><div class="r gr" style="left:160px;top:308px">nvarchar(24)</div><div class="a" style="left:0;right:0;top:331px;height:23px;background:#dcdcdc"></div><div class="cb" style="left:43px;top:336px"></div><div class="r gr" style="left:64px;top:331px">Extension</div><div class="r gr" style="left:160px;top:331px">nvarchar(4)</div><div class="a" style="left:0;right:0;top:354px;height:23px;background:#dcdcdc"></div><div class="cb" style="left:43px;top:359px"></div><div class="r gr" style="left:64px;top:354px">Photo</div><div class="r gr" style="left:160px;top:354px">image</div><div class="a" style="left:0;right:0;top:377px;height:23px;background:#dcdcdc"></div><div class="cb" style="left:43px;top:382px"></div><div class="r gr" style="left:64px;top:377px">Notes</div><div class="r gr" style="left:160px;top:377px">ntext</div><div class="a" style="left:32px;top:31px;width:1px;bottom:0;background:#000"></div><div class="a" style="left:153px;top:31px;width:1px;bottom:0;background:#000"></div></div></div></body></html>
